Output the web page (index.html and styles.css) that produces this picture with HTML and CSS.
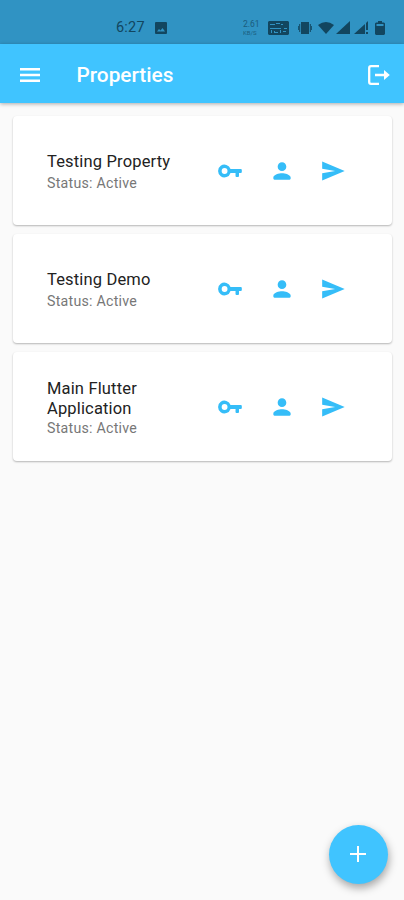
FILE: index.html
```html
<!DOCTYPE html>
<html lang="en">
<head>
<meta charset="utf-8">
<title>Properties</title>
<link rel="stylesheet" href="styles.css">
</head>
<body>
<svg class="symbols" aria-hidden="true">
  <symbol id="key" viewBox="0 0 24 24"><path fill-rule="evenodd" d="M12.5 10.2A5.9 5.9 0 1 0 12.5 13.8H17.1V16.7Q17.1 17.6 18 17.6H19.4Q20.3 17.6 20.3 16.7V13.8H22Q22.9 13.8 22.9 12.9V11.1Q22.9 10.2 22 10.2ZM7 14.7A2.7 2.7 0 1 1 7 9.3A2.7 2.7 0 0 1 7 14.7Z"/></symbol>
  <symbol id="person" viewBox="0 0 24 24"><path d="M12 12c2.21 0 4-1.79 4-4s-1.79-4-4-4-4 1.79-4 4 1.79 4 4 4zm0 2c-2.67 0-8 1.34-8 4v1q0 1 1 1h14q1 0 1-1v-1c0-2.66-5.33-4-8-4z"/></symbol>
  <symbol id="send" viewBox="0 0 24 24"><path d="M2.01 20.7L22.8 12 2.01 3.3 2 10l12 2-12 2z"/></symbol>
</svg>
<div class="status-bar">
  <span class="clock">6:27</span>
  <svg class="photo" viewBox="0 0 12 12"><path fill-rule="evenodd" d="M1 0H11Q12 0 12 1V11Q12 12 11 12H1Q0 12 0 11V1Q0 0 1 0ZM2 9.5H10L7.5 6L5.5 8.5L4 7Z"/></svg>
  <span class="speed"><span>2.61</span><span>KB/S</span></span>
  <svg class="volte" viewBox="0 0 21 14"><path fill-rule="evenodd" d="M1 0H20L21 1V13L20 14H1L0 13V1ZM2 3V4H7V3ZM8 2V3H12V2ZM13 3V4H15V3ZM2 7V8H13V7ZM3 9V12H4V9ZM6 10V12H10V11H7V10ZM12 9V12H13V9ZM16 7V8H19V7ZM15 10V11H18V10Z"/></svg>
  <svg class="vibrate" viewBox="0 0 14 12"><path d="M3 0H11V12H3ZM1.2 2H2.2V10H1.2ZM11.8 2H12.8V10H11.8ZM0 4H.8V8H0ZM13.2 4H14V8H13.2Z"/></svg>
  <svg class="wifi" viewBox="0 0 16 12"><path d="M0 3Q8 -3 16 3L8 12Z"/></svg>
  <svg class="signal" viewBox="0 0 14 13"><path d="M14 0V13H0Z"/></svg>
  <svg class="signal two" viewBox="0 0 14 13"><path d="M11 3V13H0ZM12 2L14 0V9H12ZM12 11H14V13H12Z"/></svg>
  <svg class="battery" viewBox="0 0 10 14"><path fill-rule="evenodd" d="M3 0H7V1.5H9L10 2.5V13L9 14H1L0 13V2.5L1 1.5H3ZM1.5 3V5H8.5V3Z"/></svg>
</div>
<header class="app-bar">
  <svg class="menu" viewBox="0 0 20 14"><path d="M0 0H20V2.4H0ZM0 5.8H20V8.2H0ZM0 11.6H20V14H0Z"/></svg>
  <h1>Properties</h1>
  <svg class="logout" viewBox="0 0 22 20"><path class="line" d="M11 1.2H3Q1.2 1.2 1.2 3V17Q1.2 18.8 3 18.8H11M7 10H18"/><path d="M16 5L21.8 10L16 15Z"/></svg>
</header>
<main>
  <section class="card">
    <div class="info"><h2>Testing Property</h2><p>Status: Active</p></div>
    <div class="actions"><svg><use href="#key"/></svg><svg><use href="#person"/></svg><svg><use href="#send"/></svg></div>
  </section>
  <section class="card">
    <div class="info"><h2>Testing Demo</h2><p>Status: Active</p></div>
    <div class="actions"><svg><use href="#key"/></svg><svg><use href="#person"/></svg><svg><use href="#send"/></svg></div>
  </section>
  <section class="card wrapped">
    <div class="info"><h2>Main Flutter Application</h2><p>Status: Active</p></div>
    <div class="actions"><svg><use href="#key"/></svg><svg><use href="#person"/></svg><svg><use href="#send"/></svg></div>
  </section>
</main>
<button class="fab" aria-label="Add"><svg viewBox="0 0 16 16"><path d="M7 0H9V7H16V9H9V16H7V9H0V7H7Z"/></svg></button>
</body>
</html>
```
FILE: styles.css
```css
* { box-sizing: border-box; }
body {
  margin: 0;
  height: 900px;
  overflow: hidden;
  background: #fafafa;
  font-family: Roboto, sans-serif;
}
h1, h2, p { margin: 0; font-weight: 400; }
svg { display: block; flex: none; }
.symbols { position: absolute; width: 0; height: 0; }

.status-bar {
  height: 44px;
  padding: 11px 0 0 116px;
  display: flex;
  align-items: center;
  background: #3093c3;
  color: #12465f;
  fill: #12465f;
}
.clock { width: 39px; font-size: 14.5px; line-height: 17px; letter-spacing: 0.2px; }
.photo { width: 12px; height: 12px; }
.speed {
  width: 25px;
  margin-left: 76px;
  display: flex;
  flex-direction: column;
  font-size: 8.5px;
  line-height: 10px;
  opacity: 0.7;
}
.speed span + span { font-size: 6px; line-height: 7px; }
.volte { width: 21px; height: 14px; }
.vibrate { width: 14px; height: 12px; margin-left: 9px; }
.wifi { width: 16px; height: 12px; margin-left: 6px; }
.signal { width: 14px; height: 13px; margin-left: 2px; }
.signal.two { margin-left: 4px; }
.battery { width: 10px; height: 14px; margin-left: 7px; }

.app-bar {
  position: relative;
  height: 59px;
  padding: 2px 14px 0 20px;
  display: flex;
  align-items: center;
  background: #40c4ff;
  color: #fff;
  fill: #fff;
  box-shadow: 0 1px 4px rgba(0, 0, 0, 0.32);
}
.menu { width: 20px; height: 14px; margin-right: 36.5px; }
.app-bar h1 { font-size: 20.8px; line-height: 26px; font-weight: 500; }
.logout {
  width: 22px;
  height: 20px;
  margin-left: auto;
}
.logout .line { fill: none; stroke: #fff; stroke-width: 2.3; }

main {
  padding: 13px 12px 0 13px;
  display: flex;
  flex-direction: column;
  gap: 9px;
}
.card {
  height: 109px;
  padding: 0 46px 0 34px;
  display: flex;
  align-items: center;
  justify-content: space-between;
  background: #fff;
  border-radius: 4px;
  box-shadow: 0 1px 2px rgba(0, 0, 0, 0.28);
}
.info { width: 140px; padding-top: 3px; }
.info h2 { font-size: 16.5px; line-height: 20px; letter-spacing: 0.16px; color: #222; }
.info p { margin-top: 1px; font-size: 14.2px; line-height: 20px; letter-spacing: 0.25px; color: #777; }
.wrapped .info { width: 120px; }
.wrapped .info p { margin-top: -1px; }
.actions { display: flex; gap: 25.5px; fill: #35bdf8; }
.actions svg { width: 26px; height: 26px; }

.fab {
  position: absolute;
  right: 16px;
  bottom: 16px;
  width: 59px;
  height: 59px;
  padding: 0 1px 1px 0;
  display: grid;
  place-items: center;
  border: 0;
  border-radius: 50%;
  background: #40c4ff;
  fill: #fff;
  box-shadow: 1px 4px 8px rgba(0, 0, 0, 0.34);
}
.fab svg { width: 16px; height: 16px; }
```
